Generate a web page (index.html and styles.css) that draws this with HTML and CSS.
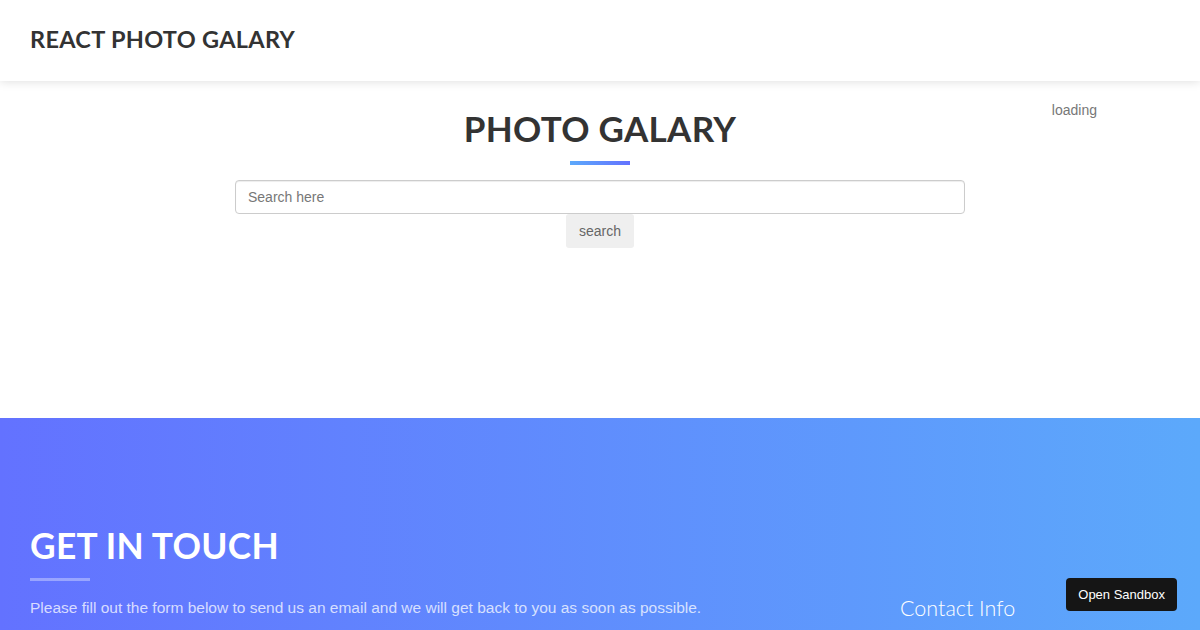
FILE: index.html
```html
<!DOCTYPE html>
<html lang="en">
<head>
    <meta charset="UTF-8">
    <meta name="viewport" content="width=device-width, initial-scale=1">
    <title>React Photo Galary</title>
    <link rel="stylesheet" href="styles.css">
</head>
<body>
    <nav class="navbar">
        <a class="brand" href="#page-top">REACT PHOTO GALARY</a>
    </nav>
    <section class="gallery">
        <span class="loading">loading</span>
        <div class="section-title">
            <h2>PHOTO GALARY</h2>
        </div>
        <form class="search-form">
            <input class="search-input" type="text" placeholder="Search here">
            <button class="search-btn" type="submit">search</button>
        </form>
    </section>
    <section class="contact">
        <div class="contact-main">
            <h2>GET IN TOUCH</h2>
            <p>Please fill out the form below to send us an email and we will get back to you as soon as possible.</p>
        </div>
        <div class="contact-info">
            <h3>Contact Info</h3>
        </div>
    </section>
    <a class="sandbox-btn" href="#">Open Sandbox</a>
</body>
</html>
```

FILE: styles.css
```css
* { box-sizing: border-box; }
body { margin: 0; font-family: "Liberation Sans", Arial, sans-serif; color: #777; background: #fff; overflow: hidden; }
h2, h3 { font-family: Lato, "Open Sans", sans-serif; margin: 0; }

.navbar { height: 81px; padding: 0 30px 3px; display: flex; align-items: center; background: #fff; box-shadow: 0 0 10px rgba(0, 0, 0, 0.15); position: relative; z-index: 2; }
.brand { font-family: Lato, sans-serif; font-weight: 700; font-size: 23.5px; color: #333; text-decoration: none; letter-spacing: 0.3px; }

.gallery { height: 337px; position: relative; padding-top: 24px; }
.loading { position: absolute; top: 21px; right: 103px; font-size: 14px; color: #777; }
.section-title { display: flex; flex-direction: column; align-items: center; }
.section-title h2 { font-size: 35px; font-weight: 700; color: #333; line-height: 46px; letter-spacing: 0.3px; }
.section-title h2::after { content: ""; display: block; width: 60px; height: 4px; margin: 10px auto 0; background: linear-gradient(to right, #5ca9fb 0%, #6372ff 100%); }

.search-form { display: flex; flex-direction: column; align-items: center; margin-top: 15px; }
.search-input { width: 730px; height: 34px; padding: 6px 12px; font: 14px "Liberation Sans", Arial, sans-serif; color: #555; border: 1px solid #ccc; border-radius: 4px; box-shadow: inset 0 1px 1px rgba(0, 0, 0, 0.075); }
.search-input::placeholder { color: #777; }
.search-btn { height: 34px; padding: 0 13px; font: 14px "Liberation Sans", Arial, sans-serif; color: #666; background: #efefef; border: 0; border-radius: 3px; }

.contact { height: 212px; padding: 105px 30px 0; display: flex; color: rgba(255, 255, 255, 0.75); background: linear-gradient(to right, #6372ff 0%, #5ca9fb 100%); }
.contact-main { width: 870px; }
.contact h2 { font-size: 35.3px; font-weight: 700; color: #fff; line-height: 46px; letter-spacing: 0.3px; }
.contact h2::after { content: ""; display: block; width: 60px; height: 3px; margin-top: 9px; background: rgba(255, 255, 255, 0.35); }
.contact p { margin: 18px 0 0; font-size: 15.5px; }
.contact-info h3 { margin-top: 72px; font-size: 21.5px; font-weight: 300; color: #fff; }

.sandbox-btn { position: fixed; right: 23px; bottom: 19px; padding: 9px 12px; font: 13px "Liberation Sans", Arial, sans-serif; color: #fff; background: #151515; border-radius: 4px; text-decoration: none; }
```
